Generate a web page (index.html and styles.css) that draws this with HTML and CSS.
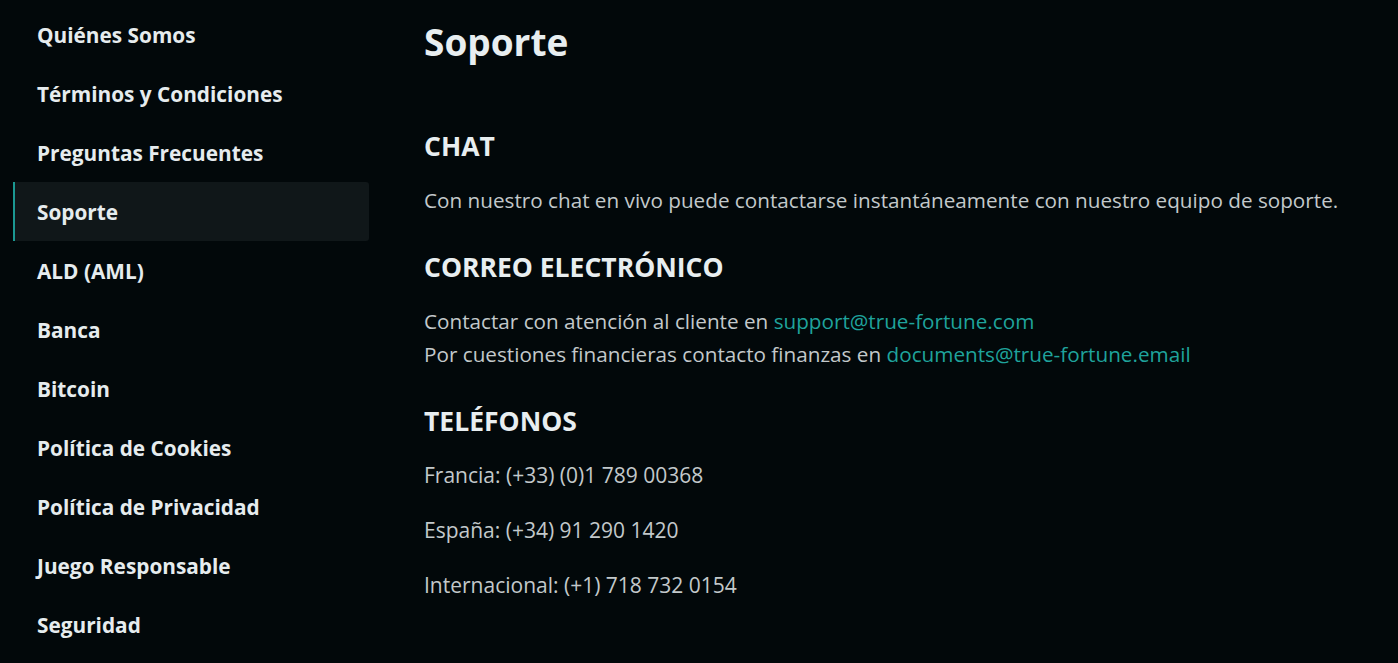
FILE: index.html
```html
<!DOCTYPE html>
<html lang="es">
<head>
<meta charset="utf-8">
<title>Soporte</title>
<link rel="stylesheet" href="styles.css">
</head>
<body>
<div class="layout">
  <nav class="sidebar">
    <a class="nav-item" href="#">Quiénes Somos</a>
    <a class="nav-item" href="#">Términos y Condiciones</a>
    <a class="nav-item" href="#">Preguntas Frecuentes</a>
    <a class="nav-item active" href="#">Soporte</a>
    <a class="nav-item" href="#">ALD (AML)</a>
    <a class="nav-item" href="#">Banca</a>
    <a class="nav-item" href="#">Bitcoin</a>
    <a class="nav-item" href="#">Política de Cookies</a>
    <a class="nav-item" href="#">Política de Privacidad</a>
    <a class="nav-item" href="#">Juego Responsable</a>
    <a class="nav-item" href="#">Seguridad</a>
  </nav>
  <main class="content">
    <h1 class="title">Soporte</h1>
    <h2 class="section-title first">CHAT</h2>
    <p class="text">Con nuestro chat en vivo puede contactarse instantáneamente con nuestro equipo de soporte.</p>
    <h2 class="section-title">CORREO ELECTRÓNICO</h2>
    <p class="text">Contactar con atención al cliente en <a class="link" href="#">support@true-fortune.com</a><br>Por cuestiones financieras contacto finanzas en <a class="link" href="#">documents@true-fortune.email</a></p>
    <h2 class="section-title">TELÉFONOS</h2>
    <p class="text phone">Francia: (+33) (0)1 789 00368</p>
    <p class="text phone">España: (+34) 91 290 1420</p>
    <p class="text phone">Internacional: (+1) 718 732 0154</p>
  </main>
</div>
</body>
</html>
```

FILE: styles.css
```css
html, body {
  margin: 0;
  padding: 0;
  background: #02080a;
  height: 100%;
  overflow: hidden;
}
body {
  font-family: "Open Sans", "Noto Sans", sans-serif;
  color: #e6ecee;
}
.layout {
  display: flex;
  align-items: flex-start;
}
.sidebar {
  display: flex;
  flex-direction: column;
  width: 356px;
  margin: 5px 0 0 13px;
  flex-shrink: 0;
}
.nav-item {
  display: flex;
  align-items: center;
  height: 59px;
  padding-left: 22px;
  box-sizing: border-box;
  border-left: 2px solid transparent;
  font-size: 20.8px;
  font-weight: 700;
  color: #e6ecee;
  text-decoration: none;
}
.nav-item.active {
  background: #101719;
  border-left-color: #1b9892;
  border-radius: 0 3px 3px 0;
}
.content {
  padding-left: 55px;
  flex: 1;
}
.title {
  margin: 17px 0 0;
  font-size: 37px;
  line-height: 50px;
  font-weight: 700;
  color: #e8eef0;
}
.section-title {
  margin: 0;
  font-size: 26.5px;
  line-height: 36px;
  font-weight: 700;
  color: #e8eef0;
}
.section-title.first {
  margin-top: 61px;
}
.text {
  margin: 20px 0 32px;
  font-size: 20.7px;
  line-height: 33px;
  color: #c3c9cb;
}
.text.phone {
  margin: 20px 0 22px;
  font-size: 21px;
}
.link {
  color: #1fa39c;
  text-decoration: none;
}
```
